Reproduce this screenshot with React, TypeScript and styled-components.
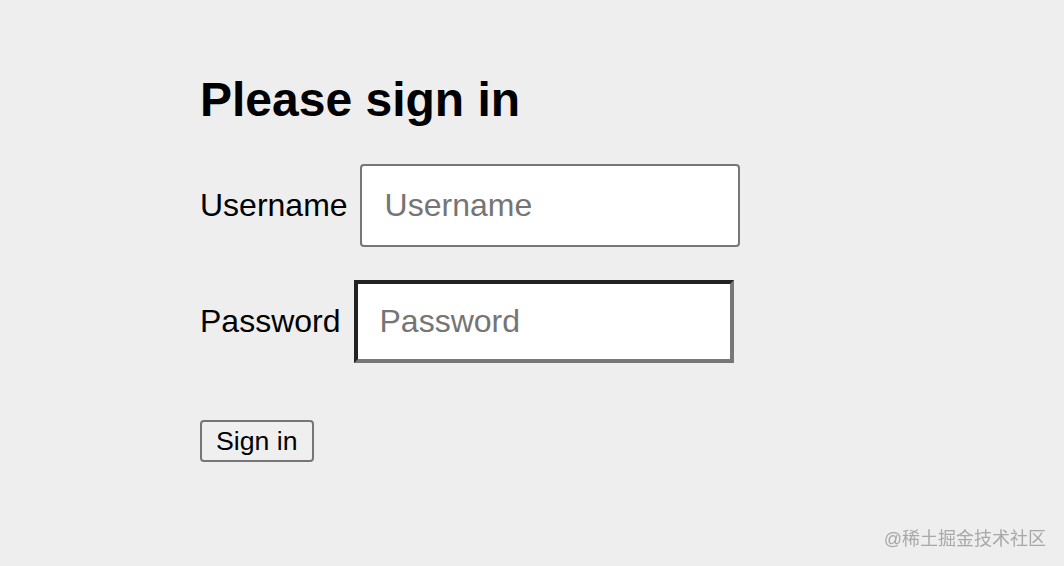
import React, { useState } from "react";
import styled, { createGlobalStyle } from "styled-components";

const GlobalStyle = createGlobalStyle`
  html,
  body {
    margin: 0;
    padding: 0;
    background: #eeeeee;
    font-family: "Liberation Sans", Arial, "Noto Sans CJK SC", sans-serif;
    color: #000;
  }
`;

function App() {
  const [username, setUsername] = useState<string>("");
  const [password, setPassword] = useState<string>("");

  const onSubmit = (e: React.FormEvent) => {
    e.preventDefault();
  };

  return (
    <>
      <GlobalStyle />
      <StyledPage>
        <StyledTitle>Please sign in</StyledTitle>
        <StyledForm onSubmit={onSubmit}>
          {/* Username row */}
          <StyledRow>
            <StyledLabel htmlFor="username">Username</StyledLabel>
            <StyledInput
              id="username"
              type="text"
              placeholder="Username"
              value={username}
              onChange={(e) => setUsername(e.target.value)}
            />
          </StyledRow>
          {/* Password row */}
          <StyledRow $gap={13}>
            <StyledLabel htmlFor="password">Password</StyledLabel>
            <StyledInput
              id="password"
              type="password"
              placeholder="Password"
              value={password}
              $inset
              onChange={(e) => setPassword(e.target.value)}
            />
          </StyledRow>
          <StyledButtonRow>
            <StyledButton type="submit">Sign in</StyledButton>
          </StyledButtonRow>
        </StyledForm>
      </StyledPage>
      <StyledWatermark>@稀土掘金技术社区</StyledWatermark>
    </>
  );
}

export default App;

const StyledPage = styled.div`
  width: 1064px;
  height: 566px;
  box-sizing: border-box;
  padding: 72px 0 0 200px;
`;

const StyledTitle = styled.h1`
  margin: 0;
  font-size: 48px;
  line-height: 55px;
  font-weight: 700;
`;

const StyledForm = styled.form`
  margin-top: 37px;
  display: flex;
  flex-direction: column;
  gap: 33px;
`;

const StyledRow = styled.div<{ $gap?: number }>`
  display: flex;
  align-items: center;
  gap: ${({ $gap }) => $gap ?? 12}px;
`;

const StyledLabel = styled.label`
  font-size: 32px;
  line-height: 37px;
`;

const StyledInput = styled.input<{ $inset?: boolean }>`
  box-sizing: border-box;
  width: 380px;
  height: 83px;
  margin: 0;
  padding: 0 0 0 ${({ $inset }) => ($inset ? "22px" : "23px")};
  background: #ffffff;
  font-family: inherit;
  font-size: 32px;
  color: #000;
  outline: none;
  border-radius: ${({ $inset }) => ($inset ? "0" : "4px")};
  border: ${({ $inset }) => ($inset ? "4px solid #777777" : "2px solid #767676")};
  ${({ $inset }) =>
    $inset &&
    `
    border-top-color: #222222;
    border-left-color: #222222;
  `}
  ::placeholder {
    color: #757575;
  }
`;

const StyledButtonRow = styled.div`
  margin-top: 24px;
  display: flex;
`;

const StyledButton = styled.button`
  box-sizing: border-box;
  height: 42px;
  padding: 0 14px;
  margin: 0;
  background: #efefef;
  border: 2px solid #767676;
  border-radius: 4px;
  font-family: inherit;
  font-size: 26.67px;
  color: #000;
  cursor: pointer;
`;

const StyledWatermark = styled.div`
  position: fixed;
  right: 18px;
  bottom: 16px;
  font-size: 18px;
  line-height: 22px;
  color: #a8a8a8;
`;
